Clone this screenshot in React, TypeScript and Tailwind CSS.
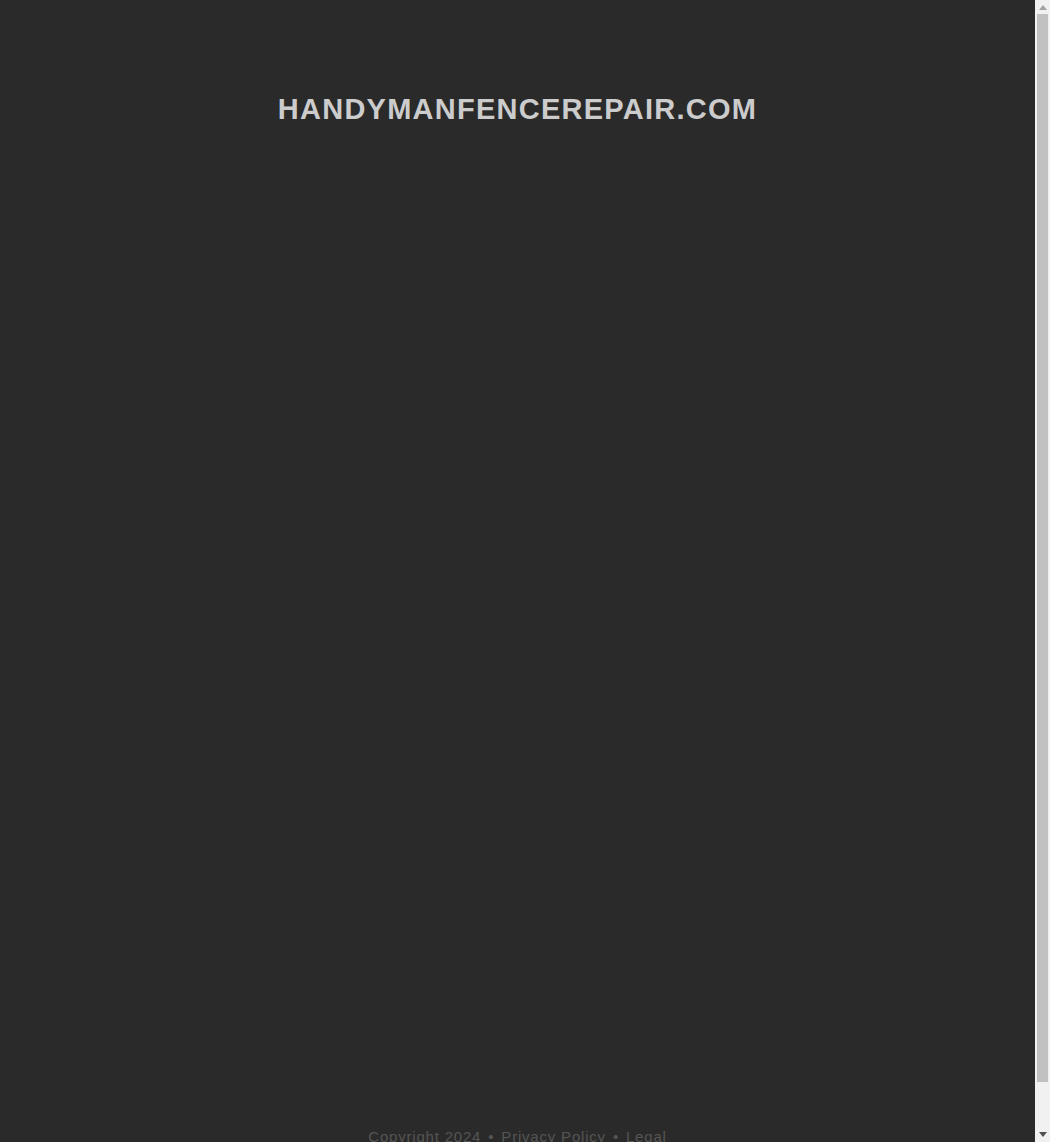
import React from "react";

// Classic browser scrollbar as seen in the screenshot
const FakeScrollbar: React.FC = () => {
    return (
        <div className="fixed right-0 top-0 h-screen w-[15px] bg-[#f1f1f1] flex flex-col items-center">
            <div className="h-[14px] w-full flex items-center justify-center">
                <svg width="8" height="5" viewBox="0 0 8 5" className="mt-[1px]">
                    <polygon points="4,0 8,5 0,5" fill="#a3a3a3" />
                </svg>
            </div>
            <div className="h-[1068px] w-[11px] bg-[#c1c1c1]" />
            <div className="flex-1" />
            <div className="h-[15px] w-full flex items-center justify-center">
                <svg width="8" height="5" viewBox="0 0 8 5" className="mb-[1px]">
                    <polygon points="0,0 8,0 4,5" fill="#505050" />
                </svg>
            </div>
        </div>
    );
};

const App: React.FC = () => {
    return (
        <div className="min-h-screen bg-[#2a2a2a] font-['Liberation_Sans',Arial,sans-serif]">
            <div className="mr-[15px] flex flex-col">
                {/* Domain title */}
                <main className="min-h-[1117px] pt-[92px] text-center">
                    <h1 className="text-[29px] leading-[35px] font-bold tracking-[1.25px] text-[#cccccc]">
                        HANDYMANFENCEREPAIR.COM
                    </h1>
                </main>

                {/* Footer */}
                <footer className="pt-[9px] pb-6 text-center text-[15px] leading-[22px] tracking-[0.8px] text-[#555555]">
                    <span>Copyright 2024</span>
                    <span className="mx-[7px]">•</span>
                    <a href="#" className="text-[#555555]">Privacy Policy</a>
                    <span className="mx-[7px]">•</span>
                    <a href="#" className="text-[#555555]">Legal</a>
                </footer>
            </div>
            <FakeScrollbar />
        </div>
    );
};

export default App;
